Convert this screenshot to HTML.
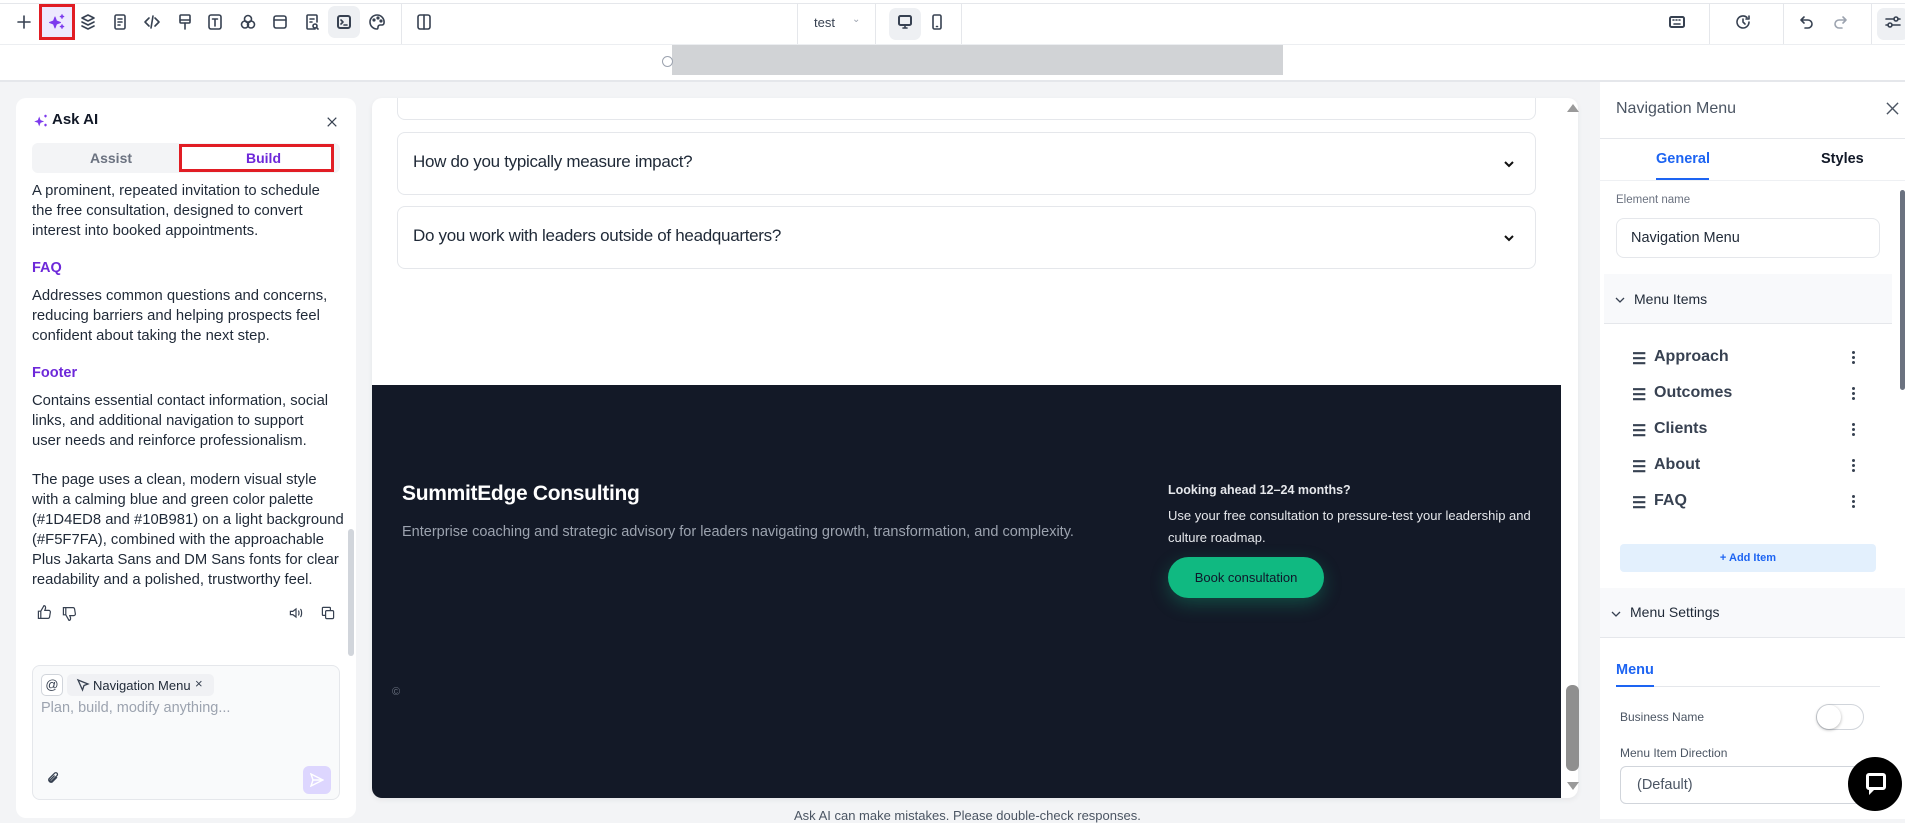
<!DOCTYPE html>
<html><head><meta charset="utf-8"><style>
*{box-sizing:border-box;margin:0;padding:0}
body{width:1905px;height:819px;overflow:hidden;background:#f3f4f6;font-family:"Liberation Sans",sans-serif;position:relative;color:#1f2937}
.a{position:absolute}
svg{display:block}
.ic{position:absolute;top:12px;width:20px;height:20px}
.ic svg{width:20px;height:20px;fill:none;stroke:#374151;stroke-width:1.6;stroke-linecap:round;stroke-linejoin:round}
.sep{position:absolute;top:4px;height:40px;width:1px;background:#e5e7eb}
.lp p{font-size:14.8px;line-height:20px;color:#1f2937;margin-bottom:19px;white-space:nowrap}
.lp h4{font-size:14.5px;color:#6d28d9;font-weight:bold;margin-bottom:10px}
.faq{position:absolute;left:397px;width:1139px;border:1px solid #e5e7eb;border-radius:8px;background:#fff}
.faq span{position:absolute;left:15px;font-size:17px;color:#1f2937;letter-spacing:-0.3px}
.mi{position:absolute;left:1632px;font-size:16px;font-weight:bold;color:#374151}
.mi b{position:absolute;left:22px;top:-1px;white-space:nowrap}
.dots{position:absolute;left:1852px;width:3px}
.dots i{display:block;width:3px;height:3px;border-radius:50%;background:#374151;margin-bottom:2px}
</style></head><body>
<!-- top bars -->
<div class="a" style="left:0;top:0;width:1905px;height:82px;background:#fff;border-bottom:2px solid #e5e7eb"></div>
<div class="a" style="left:0;top:3px;width:1905px;height:1px;background:#e5e7eb"></div>
<div class="a" style="left:0;top:44px;width:1905px;height:1px;background:#eceef1"></div>
<div class="a" style="left:672px;top:45px;width:611px;height:30px;background:#d1d3d6"></div>
<div class="a" style="left:662px;top:56px;width:11px;height:11px;border:1.5px solid #9ca3af;border-radius:50%"></div>

<div class="ic" style="left:14px"><svg viewBox="0 0 20 20"><path d="M10 4v12M4 10h12"/></svg></div>
<div class="a" style="left:39px;top:4px;width:36px;height:36px;border:3px solid #e11d24;background:#ede9fe"></div>
<div class="ic" style="left:47px"><svg viewBox="0 0 20 20"><path d="M8 5l1.5 4 4 1.5-4 1.5L8 16l-1.5-4-4-1.5 4-1.5z" fill="#7c3aed" stroke="#7c3aed" stroke-width="1"/><path d="M15 3v3M13.5 4.5h3M15 13v3M13.5 14.5h3" stroke="#7c3aed"/></svg></div>
<div class="ic" style="left:78px"><svg viewBox="0 0 20 20"><path d="M10 3l6 3-6 3-6-3zM4 10l6 3 6-3M4 14l6 3 6-3"/></svg></div>
<div class="ic" style="left:110px"><svg viewBox="0 0 20 20"><rect x="5" y="3" width="10" height="14" rx="1.5"/><path d="M8 7h4M8 10h4M8 13h2"/></svg></div>
<div class="ic" style="left:142px"><svg viewBox="0 0 20 20"><path d="M7 6l-4 4 4 4M13 6l4 4-4 4M11 4l-2 12"/></svg></div>
<div class="ic" style="left:175px"><svg viewBox="0 0 20 20"><rect x="5" y="3" width="10" height="8" rx="1"/><path d="M5 8h10M10 11v6"/></svg></div>
<div class="ic" style="left:205px"><svg viewBox="0 0 20 20"><rect x="4" y="3" width="12" height="14" rx="2"/><path d="M7.5 7h5M10 7v7"/></svg></div>
<div class="ic" style="left:238px"><svg viewBox="0 0 20 20"><circle cx="10" cy="7" r="3.5"/><circle cx="7" cy="12.5" r="3.5"/><circle cx="13" cy="12.5" r="3.5"/></svg></div>
<div class="ic" style="left:270px"><svg viewBox="0 0 20 20"><rect x="4" y="4" width="12" height="12" rx="2"/><path d="M4 8h12"/></svg></div>
<div class="ic" style="left:302px"><svg viewBox="0 0 20 20"><path d="M13 17H6a1 1 0 01-1-1V4a1 1 0 011-1h8a1 1 0 011 1v6M8 7h4M8 10h2"/><circle cx="13" cy="14" r="2"/><path d="M14.5 15.5l1.5 1.5"/></svg></div>
<div class="a" style="left:328px;top:6px;width:32px;height:32px;border-radius:7px;background:#eef0f3"></div>
<div class="ic" style="left:334px"><svg viewBox="0 0 20 20"><rect x="4" y="4" width="12" height="12" rx="2" stroke-width="2"/><path d="M7 8l2 2-2 2M10 13h3"/></svg></div>
<div class="ic" style="left:367px"><svg viewBox="0 0 20 20"><path d="M10 3a7 7 0 100 14c1 0 1-1 1-2s1-2 2-2h2a2 2 0 002-2 7 7 0 00-7-8z"/><circle cx="7" cy="8" r=".8"/><circle cx="11" cy="6" r=".8"/><circle cx="14" cy="9" r=".8"/></svg></div>
<div class="sep" style="left:401px"></div>
<div class="ic" style="left:414px"><svg viewBox="0 0 20 20"><rect x="4" y="3" width="12" height="14" rx="2"/><path d="M10 3v14"/></svg></div>
<div class="sep" style="left:797px"></div>
<div class="a" style="left:814px;top:15px;font-size:13px;color:#374151">test</div>
<div class="a" style="left:852px;top:14px;font-size:10px;color:#9ca3af">&#8964;</div>
<div class="sep" style="left:875px"></div>
<div class="a" style="left:889px;top:8px;width:32px;height:32px;border-radius:7px;background:#eef0f3"></div>
<div class="ic" style="left:895px"><svg viewBox="0 0 20 20"><rect x="4" y="4" width="12" height="9" rx="1.5" stroke-width="2"/><path d="M10 13v3M8 16h4"/></svg></div>
<div class="ic" style="left:927px"><svg viewBox="0 0 20 20"><rect x="6" y="3" width="8" height="14" rx="1.5"/><path d="M9.5 14.5h1"/></svg></div>
<div class="sep" style="left:961px"></div>
<div class="ic" style="left:1667px"><svg viewBox="0 0 20 20"><rect x="3" y="5" width="14" height="10" rx="1.5" stroke-width="2"/><path d="M6 8h1M9 8h1M12 8h1M7 12h6"/></svg></div>
<div class="sep" style="left:1709px"></div>
<div class="ic" style="left:1733px"><svg viewBox="0 0 20 20"><path d="M16 10a6 6 0 11-2-4.5M16 4v3h-3M10 7v3l2 2"/></svg></div>
<div class="sep" style="left:1783px"></div>
<div class="ic" style="left:1797px"><svg viewBox="0 0 20 20"><path d="M7 5L4 8l3 3M4 8h7a4 4 0 010 8H8"/></svg></div>
<div class="ic" style="left:1830px"><svg viewBox="0 0 20 20" style="stroke:#9ca3af"><path d="M13 5l3 3-3 3M16 8H9a4 4 0 000 8h3"/></svg></div>
<div class="sep" style="left:1871px"></div>
<div class="a" style="left:1877px;top:8px;width:32px;height:32px;border-radius:7px;background:#eef0f3"></div>
<div class="ic" style="left:1883px"><svg viewBox="0 0 20 20"><path d="M3 7h8M15 7h2M3 13h2M9 13h8"/><circle cx="13" cy="7" r="2"/><circle cx="7" cy="13" r="2"/></svg></div>

<!-- left panel -->
<div class="a" style="left:16px;top:98px;width:340px;height:720px;background:#fff;border-radius:10px"></div>
<div class="a" style="left:32px;top:112px"><svg width="18" height="18" viewBox="0 0 20 20"><path d="M8 5l1.5 4 4 1.5-4 1.5L8 16l-1.5-4-4-1.5 4-1.5z" fill="#7c3aed"/><path d="M15 3v3M13.5 4.5h3M15 13v3M13.5 14.5h3" stroke="#7c3aed" stroke-width="1.4"/></svg></div>
<div class="a" style="left:52px;top:111px;font-size:15px;font-weight:bold;color:#111827">Ask AI</div>
<div class="a" style="left:326px;top:116px"><svg width="12" height="12" viewBox="0 0 14 14" stroke="#374151" stroke-width="1.4"><path d="M2 2l10 10M12 2L2 12"/></svg></div>
<div class="a" style="left:32px;top:143px;width:308px;height:30px;background:#f3f4f6;border-radius:6px"></div>
<div class="a" style="left:90px;top:150px;font-size:14px;font-weight:bold;color:#6b7280">Assist</div>
<div class="a" style="left:179px;top:144px;width:155px;height:28px;background:#fff;border:3px solid #e11d24"></div>
<div class="a" style="left:246px;top:150px;font-size:14px;font-weight:bold;color:#6d28d9">Build</div>
<div class="a lp" style="left:32px;top:181px;width:310px">
<p>A prominent, repeated invitation to schedule<br>the free consultation, designed to convert<br>interest into booked appointments.</p>
<h4>FAQ</h4>
<p>Addresses common questions and concerns,<br>reducing barriers and helping prospects feel<br>confident about taking the next step.</p>
<h4>Footer</h4>
<p>Contains essential contact information, social<br>links, and additional navigation to support<br>user needs and reinforce professionalism.</p>
<p>The page uses a clean, modern visual style<br>with a calming blue and green color palette<br>(#1D4ED8 and #10B981) on a light background<br>(#F5F7FA), combined with the approachable<br>Plus Jakarta Sans and DM Sans fonts for clear<br>readability and a polished, trustworthy feel.</p>
</div>
<div class="a" style="left:36px;top:604px"><svg width="16" height="16" viewBox="0 0 20 20" fill="none" stroke="#374151" stroke-width="1.5"><path d="M6 9v9H3V9zM6 9l4-7c2 0 2 2 2 3l-1 3h5a2 2 0 012 2l-1 6a2 2 0 01-2 2H6"/></svg></div>
<div class="a" style="left:61px;top:606px"><svg width="16" height="16" viewBox="0 0 20 20" fill="none" stroke="#374151" stroke-width="1.5"><path d="M6 11V2H3v9zM6 11l4 7c2 0 2-2 2-3l-1-3h5a2 2 0 002-2l-1-6a2 2 0 00-2-2H6"/></svg></div>
<div class="a" style="left:288px;top:605px"><svg width="16" height="16" viewBox="0 0 20 20" fill="none" stroke="#374151" stroke-width="1.5"><path d="M3 8h3l4-3v10l-4-3H3zM13 7c1 1 1 5 0 6M15.5 5c2 2 2 8 0 10"/></svg></div>
<div class="a" style="left:320px;top:605px"><svg width="16" height="16" viewBox="0 0 20 20" fill="none" stroke="#374151" stroke-width="1.5"><rect x="7" y="7" width="10" height="10" rx="1.5"/><path d="M13 7V4a1 1 0 00-1-1H4a1 1 0 00-1 1v8a1 1 0 001 1h3"/></svg></div>
<div class="a" style="left:348px;top:529px;width:6px;height:127px;background:#d1d5db;border-radius:3px"></div>
<div class="a" style="left:32px;top:665px;width:308px;height:135px;background:#f9fafb;border:1px solid #e5e7eb;border-radius:8px"></div>
<div class="a" style="left:41px;top:674px;width:22px;height:22px;background:#fff;border:1px solid #d1d5db;border-radius:5px;font-size:13px;text-align:center;line-height:20px;color:#374151">@</div>
<div class="a" style="left:67px;top:674px;width:147px;height:22px;background:#f0f1f4;border-radius:5px"></div>
<div class="a" style="left:76px;top:678px"><svg width="14" height="14" viewBox="0 0 14 14" fill="none" stroke="#374151" stroke-width="1.3"><path d="M2 2l10 4-4 1.5L6.5 12z"/></svg></div>
<div class="a" style="left:93px;top:678px;font-size:13px;color:#1f2937">Navigation Menu</div>
<div class="a" style="left:195px;top:676px;font-size:13px;color:#374151">×</div>
<div class="a" style="left:41px;top:700px;font-size:14.5px;color:#9ca3af">Plan, build, modify anything...</div>
<div class="a" style="left:45px;top:770px"><svg width="16" height="16" viewBox="0 0 20 20" fill="none" stroke="#374151" stroke-width="1.6"><path d="M15 9l-6 6a3 3 0 01-4-4l7-7a2 2 0 013 3l-7 7a1 1 0 01-1.5-1.5L12 7"/></svg></div>
<div class="a" style="left:303px;top:766px;width:28px;height:28px;background:#ddd6fe;border-radius:6px"></div>
<div class="a" style="left:310px;top:773px"><svg width="14" height="14" viewBox="0 0 14 14" fill="none" stroke="#fff" stroke-width="1.4"><path d="M1 1l12 6-12 6 2-6zM3 7h10"/></svg></div>

<!-- canvas -->
<div class="a" style="left:372px;top:98px;width:1206px;height:700px;background:#fff;border-radius:10px;overflow:hidden;box-shadow:0 2px 6px rgba(0,0,0,.06)">
  <div class="a" style="left:25px;top:-20px;width:1139px;height:42px;border:1px solid #e5e7eb;border-radius:8px"></div>
</div>
<div class="faq" style="top:132px;height:63px"><span style="top:19px">How do you typically measure impact?</span><svg class="a" style="left:1104px;top:24px" width="14" height="14" viewBox="0 0 14 14" fill="none" stroke="#111" stroke-width="2"><path d="M3 5l4 4 4-4"/></svg></div>
<div class="faq" style="top:206px;height:63px"><span style="top:19px">Do you work with leaders outside of headquarters?</span><svg class="a" style="left:1104px;top:24px" width="14" height="14" viewBox="0 0 14 14" fill="none" stroke="#111" stroke-width="2"><path d="M3 5l4 4 4-4"/></svg></div>
<div class="a" style="left:372px;top:385px;width:1189px;height:413px;background:#131927;border-bottom-left-radius:10px"></div>
<div class="a" style="left:402px;top:482px;font-size:21px;font-weight:bold;color:#fff;letter-spacing:-0.3px">SummitEdge Consulting</div>
<div class="a" style="left:402px;top:524px;font-size:14.5px;color:#9ca3af">Enterprise coaching and strategic advisory for leaders navigating growth, transformation, and complexity.</div>
<div class="a" style="left:1168px;top:483px;font-size:12.5px;font-weight:bold;color:#e5e7eb">Looking ahead 12–24 months?</div>
<div class="a" style="left:1168px;top:505px;font-size:13px;line-height:22px;color:#e5e7eb;width:380px">Use your free consultation to pressure-test your leadership and culture roadmap.</div>
<div class="a" style="left:1168px;top:557px;width:156px;height:41px;background:#10b981;border-radius:21px;box-shadow:0 6px 18px rgba(16,185,129,.3);font-size:13px;color:#0f172a;text-align:center;line-height:41px">Book consultation</div>
<div class="a" style="left:392px;top:686px;font-size:11px;color:#6b7280">©</div>
<div class="a" style="left:1567px;top:104px;width:0;height:0;border-left:6px solid transparent;border-right:6px solid transparent;border-bottom:8px solid #9a9a9a"></div>
<div class="a" style="left:1566px;top:685px;width:13px;height:86px;background:#8f8f8f;border-radius:6px"></div>
<div class="a" style="left:1567px;top:782px;width:0;height:0;border-left:6px solid transparent;border-right:6px solid transparent;border-top:8px solid #9a9a9a"></div>
<div class="a" style="left:794px;top:808px;font-size:13px;color:#4b5563">Ask AI can make mistakes. Please double-check responses.</div>

<!-- right panel -->
<div class="a" style="left:1600px;top:82px;width:305px;height:737px;background:#fff"></div>
<div class="a" style="left:1616px;top:100px;font-size:16px;color:#4b5563">Navigation Menu</div>
<div class="a" style="left:1886px;top:102px"><svg width="13" height="13" viewBox="0 0 14 14" stroke="#4b5563" stroke-width="1.5"><path d="M1 1l12 12M13 1L1 13"/></svg></div>
<div class="a" style="left:1600px;top:138px;width:305px;height:1px;background:#e5e7eb"></div>
<div class="a" style="left:1656px;top:151px;font-size:14.5px;font-weight:bold;color:#1d64f2">General</div>
<div class="a" style="left:1656px;top:178px;width:53px;height:2px;background:#1d64f2"></div>
<div class="a" style="left:1821px;top:151px;font-size:14.5px;font-weight:bold;color:#111827">Styles</div>
<div class="a" style="left:1600px;top:180px;width:305px;height:1px;background:#eef0f3"></div>
<div class="a" style="left:1616px;top:194px;font-size:11.5px;color:#6b7280">Element name</div>
<div class="a" style="left:1616px;top:218px;width:264px;height:40px;border:1px solid #e5e7eb;border-radius:8px;font-size:14.5px;line-height:38px;padding-left:14px;color:#1f2937">Navigation Menu</div>
<div class="a" style="left:1604px;top:274px;width:288px;height:50px;background:#f8f9fb;border-bottom:1px solid #e5e7eb"></div>
<div class="a" style="left:1614px;top:294px"><svg width="12" height="12" viewBox="0 0 12 12" fill="none" stroke="#374151" stroke-width="1.3"><path d="M2 4l4 4 4-4"/></svg></div>
<div class="a" style="left:1634px;top:291px;font-size:14px;color:#1f2937">Menu Items</div>
<div class="a" style="left:1900px;top:190px;width:5px;height:200px;background:#6b7280;border-radius:3px"></div>
<div class="mi" style="top:349px">&#9776;<b>Approach</b></div>
<div class="mi" style="top:385px">&#9776;<b>Outcomes</b></div>
<div class="mi" style="top:421px">&#9776;<b>Clients</b></div>
<div class="mi" style="top:457px">&#9776;<b>About</b></div>
<div class="mi" style="top:493px">&#9776;<b>FAQ</b></div>
<div class="dots" style="top:351px"><i></i><i></i><i></i></div>
<div class="dots" style="top:387px"><i></i><i></i><i></i></div>
<div class="dots" style="top:423px"><i></i><i></i><i></i></div>
<div class="dots" style="top:459px"><i></i><i></i><i></i></div>
<div class="dots" style="top:495px"><i></i><i></i><i></i></div>
<div class="a" style="left:1620px;top:544px;width:256px;height:28px;background:#e3f0fd;border-radius:4px;font-size:11px;color:#1d64f2;text-align:center;line-height:28px;font-weight:bold">+ Add Item</div>
<div class="a" style="left:1600px;top:588px;width:305px;height:50px;background:#f8f9fb;border-bottom:1px solid #e5e7eb"></div>
<div class="a" style="left:1610px;top:608px"><svg width="12" height="12" viewBox="0 0 12 12" fill="none" stroke="#374151" stroke-width="1.3"><path d="M2 4l4 4 4-4"/></svg></div>
<div class="a" style="left:1630px;top:604px;font-size:14px;color:#1f2937">Menu Settings</div>
<div class="a" style="left:1616px;top:662px;font-size:14.5px;font-weight:bold;color:#1d64f2">Menu</div>
<div class="a" style="left:1616px;top:686px;width:264px;height:1px;background:#e5e7eb"></div>
<div class="a" style="left:1616px;top:685px;width:38px;height:2px;background:#1d64f2"></div>
<div class="a" style="left:1620px;top:710px;font-size:12px;color:#4b5563">Business Name</div>
<div class="a" style="left:1816px;top:704px;width:48px;height:26px;border:1px solid #d1d5db;border-radius:13px"></div>
<div class="a" style="left:1817px;top:705px;width:24px;height:24px;border-radius:50%;background:#fff;box-shadow:0 1px 3px rgba(0,0,0,.3)"></div>
<div class="a" style="left:1620px;top:746px;font-size:12px;color:#4b5563">Menu Item Direction</div>
<div class="a" style="left:1620px;top:766px;width:264px;height:38px;border:1px solid #d1d5db;border-radius:6px;font-size:14.5px;line-height:36px;padding-left:16px;color:#4b5563">(Default)</div>
<div class="a" style="left:1848px;top:757px;width:54px;height:54px;border-radius:50%;background:#000"></div>
<div class="a" style="left:1862px;top:770px"><svg width="28" height="28" viewBox="0 0 28 28"><path d="M4 6a3 3 0 013-3h14a3 3 0 013 3v11a3 3 0 01-3 3H12l-5 5v-5a3 3 0 01-3-3z" fill="#fff"/><path d="M7 6h14v11H7z" fill="#000"/></svg></div>
</body></html>
